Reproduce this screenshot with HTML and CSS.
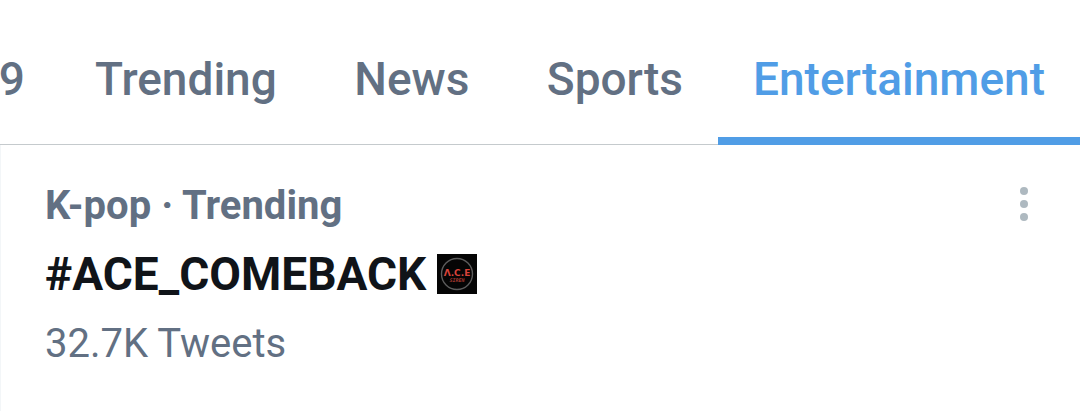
FILE: index.html
```html
<!DOCTYPE html>
<html lang="en">
<head>
<meta charset="utf-8">
<title>Explore</title>
<link rel="stylesheet" href="styles.css">
</head>
<body>
<nav class="tabs">
  <a class="tab tab-first" href="#covid">9</a>
  <a class="tab" href="#trending">Trending</a>
  <a class="tab" href="#news">News</a>
  <a class="tab" href="#sports">Sports</a>
  <a class="tab tab-active" href="#entertainment" aria-current="page">Entertainment</a>
</nav>
<main class="trend">
  <div class="trend-body">
    <p class="context">K-pop · Trending</p>
    <h2 class="title">#ACE_COMEBACK
      <svg class="badge" viewBox="0 0 40 40" aria-hidden="true">
        <rect width="40" height="40" fill="#050505"/>
        <circle cx="20" cy="20" r="15.5" fill="none" stroke="#5c5c5c" stroke-width="1.4"/>
        <text class="badge-name" x="20" y="22" text-anchor="middle">Λ.C.E</text>
        <text class="badge-sub" x="20" y="28" text-anchor="middle">SIREN</text>
      </svg>
    </h2>
    <p class="count">32.7K Tweets</p>
  </div>
  <button class="more" type="button" aria-label="More options">
    <svg class="more-icon" viewBox="0 0 8 34" aria-hidden="true"><circle cx="4" cy="4" r="4"/><circle cx="4" cy="17" r="4"/><circle cx="4" cy="30" r="4"/></svg>
  </button>
</main>
</body>
</html>
```
FILE: styles.css
```css
* { box-sizing: border-box; }
body {
  margin: 0;
  background: #fff;
  color: #627083;
  font-family: Roboto, "Liberation Sans", sans-serif;
}
.tabs {
  display: flex;
  justify-content: flex-end;
  overflow: hidden;
  padding-top: 14px;
  box-shadow: inset 0 -1px #c5cacd;
}
.tab {
  flex: none;
  min-width: 200px;
  padding: 35px 35px 28px;
  border-bottom: 8px solid transparent;
  color: inherit;
  font-size: 46px;
  font-weight: 500;
  line-height: 60px;
  text-align: center;
  text-decoration: none;
}
.tab-first {
  min-width: 0;
  padding-left: 0;
}
.tab-active {
  color: #509de6;
  border-bottom-color: #509de6;
}
.trend {
  display: flex;
  justify-content: space-between;
  align-items: flex-start;
  padding: 36px 46px 48px 44px;
  border-left: 1px solid #f3f6f8;
}
.context, .title, .count { margin: 0; }
.context { font-size: 40px; font-weight: 700; line-height: 50px; }
.title {
  display: flex;
  align-items: center;
  gap: 11px;
  margin-top: 12px;
  color: #101419;
  font-size: 46px;
  font-weight: 700;
  line-height: 62px;
}
.badge { width: 40px; height: 40px; }
.badge-name { fill: #d8433a; font-family: "DejaVu Sans", sans-serif; font-size: 9px; font-weight: 700; }
.badge-sub { fill: #a3382f; font-family: "DejaVu Sans Mono", monospace; font-size: 5px; font-style: italic; font-weight: 700; }
.count { margin-top: 13px; font-size: 40px; line-height: 52px; }
.more { padding: 6px; border: 0; background: none; }
.more-icon { display: block; width: 8px; height: 34px; fill: #aeb9c0; }
```
